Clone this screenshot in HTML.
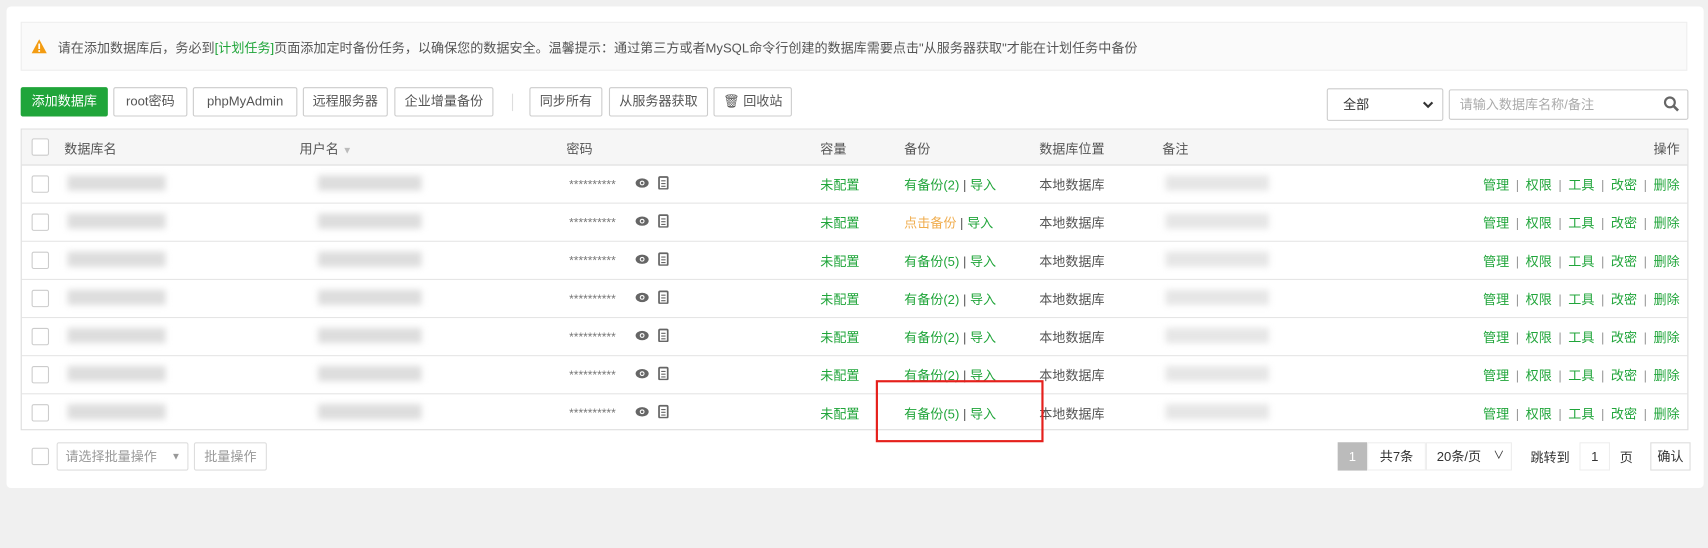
<!DOCTYPE html>
<html><head><meta charset="utf-8"><style>
html,body{margin:0;padding:0;background:#f0f0f0;width:1708px;height:547px;overflow:hidden}
#w{position:absolute;left:0;top:0;width:1568px;height:503px;transform:scale(1.0893);transform-origin:0 0;font-family:"Liberation Sans","Noto Sans CJK SC",sans-serif;font-size:12px;color:#555}
.a{position:absolute}
.panel{left:6px;top:6px;width:1558px;height:442px;background:#fff;border-radius:4px}
.alert{left:19px;top:20px;width:1530px;height:45px;background:#fafafa;border:1px solid #eee;box-sizing:border-box}
.btn{position:absolute;top:80px;height:27px;line-height:25px;border:1px solid #ccc;border-radius:2px;box-sizing:border-box;text-align:center;background:#fff;color:#555}
.tbl{left:19px;top:118px;width:1531px;height:277px;border:1px solid #ddd;box-sizing:border-box}
.hd{left:20px;top:119px;width:1529px;height:32px;background:#f6f6f6;border-bottom:1px solid #ddd}
.cb{position:absolute;width:14px;height:14px;border:1px solid #ccc;border-radius:2px;background:#fff}
.line{position:absolute;left:20px;width:1529px;height:1px;background:#e5e5e5}
.g{color:#20a53a}.o{color:#f0ad4e}
.bl{position:absolute;background:#ddd;filter:blur(3px);height:14px}
.ops{position:absolute;right:26px;color:#20a53a}
.ops i{font-style:normal;color:#999;margin:0 6px}
</style></head><body><div id="w">
<div class="a panel"></div>
<div class="a alert"></div>
<svg class="a" style="left:29px;top:36px" width="14" height="13" viewBox="0 0 14 13"><path d="M7 0L14 13H0Z" fill="#f39c12"/><rect x="6.2" y="4" width="1.6" height="5" fill="#fff"/><rect x="6.2" y="10" width="1.6" height="1.6" fill="#fff"/></svg>
<div class="a" style="left:53px;top:35px;white-space:nowrap">请在添加数据库后，务必到<span class="g">[计划任务]</span>页面添加定时备份任务，以确保您的数据安全。温馨提示：通过第三方或者MySQL命令行创建的数据库需要点击"从服务器获取"才能在计划任务中备份</div>

<div class="btn" style="left:19px;width:80px;background:#20a53a;border-color:#20a53a;color:#fff">添加数据库</div>
<div class="btn" style="left:104px;width:68px">root密码</div>
<div class="btn" style="left:177px;width:96px">phpMyAdmin</div>
<div class="btn" style="left:278px;width:78px">远程服务器</div>
<div class="btn" style="left:362px;width:91px">企业增量备份</div>
<div class="a" style="left:470px;top:86px;width:1px;height:16px;background:#ddd"></div>
<div class="btn" style="left:486px;width:67px">同步所有</div>
<div class="btn" style="left:559px;width:91px">从服务器获取</div>
<div class="btn" style="left:655px;width:72px">🗑 回收站</div>
<div class="a" style="left:1218px;top:81px;width:107px;height:30px;border:1px solid #ccc;box-sizing:border-box;border-radius:2px;line-height:28px;padding-left:14px;color:#333">全部</div>
<svg class="a" style="left:1306px;top:93px" width="10" height="7"><path d="M1 1L5 5L9 1" stroke="#333" stroke-width="2" fill="none"/></svg>
<div class="a" style="left:1330px;top:82px;width:220px;height:28px;border:1px solid #ccc;box-sizing:border-box;border-radius:2px;line-height:26px;padding-left:9px;color:#aaa">请输入数据库名称/备注</div>
<svg class="a" style="left:1527px;top:88px" width="15" height="15"><circle cx="6" cy="6" r="4.5" stroke="#666" stroke-width="2" fill="none"/><path d="M9.5 9.5L13.5 13.5" stroke="#666" stroke-width="2.4"/></svg>

<div class="a tbl"></div>
<div class="a hd"></div>
<div class="cb" style="left:29px;top:127px"></div>
<div class="a" style="left:59px;top:128px">数据库名</div>
<div class="a" style="left:275px;top:128px">用户名 <span style="color:#bbb;font-size:9px">▼</span></div>
<div class="a" style="left:520px;top:128px">密码</div>
<div class="a" style="left:753px;top:128px">容量</div>
<div class="a" style="left:830px;top:128px">备份</div>
<div class="a" style="left:954px;top:128px">数据库位置</div>
<div class="a" style="left:1067px;top:128px">备注</div>
<div class="a" style="right:26px;top:128px">操作</div>

<div id="rows"></div>
<script>
var b=['有备份(2)','点击备份','有备份(5)','有备份(2)','有备份(2)','有备份(2)','有备份(5)'],h='';
for(var i=0;i<7;i++){var t=151+i*35;
if(i>0)h+='<div class="line" style="top:'+t+'px"></div>';
var c=t+10;
h+='<div class="cb" style="left:29px;top:'+(t+10)+'px"></div>';
h+='<div class="bl" style="left:62px;top:'+c+'px;width:90px"></div>';
h+='<div class="bl" style="left:292px;top:'+c+'px;width:95px"></div>';
h+='<div class="bl" style="left:1070px;top:'+c+'px;width:95px;background:#e6e6e6"></div>';
h+='<div class="a" style="left:522px;top:'+(t+13)+'px;color:#777;font-size:11px;font-style:italic">**********</div>';
h+='<svg class="a" style="left:583px;top:'+(t+12)+'px" width="13" height="10"><ellipse cx="6.5" cy="5" rx="6" ry="4.3" fill="#666"/><circle cx="6.5" cy="5" r="2.2" fill="#fff"/><circle cx="6.5" cy="5" r="1.2" fill="#666"/></svg>';
h+='<svg class="a" style="left:604px;top:'+(t+10)+'px" width="10" height="13"><rect x="1" y="1.5" width="8" height="11" rx="1" fill="none" stroke="#666" stroke-width="1.6"/><path d="M3 5h4M3 7.5h4M3 10h4" stroke="#666"/></svg>';
h+='<div class="a g" style="left:753px;top:'+(t+10)+'px">未配置</div>';
h+='<div class="a" style="left:830px;top:'+(t+10)+'px"><span class="'+(i==1?'o':'g')+'">'+b[i]+'</span> | <span class="g">导入</span></div>';
h+='<div class="a" style="left:954px;top:'+(t+10)+'px">本地数据库</div>';
h+='<div class="ops" style="top:'+(t+10)+'px">管理<i>|</i>权限<i>|</i>工具<i>|</i>改密<i>|</i>删除</div>';
}
document.getElementById('rows').innerHTML=h;
</script>
<div class="a" style="left:804px;top:349px;width:154px;height:57px;border:2px solid #e5201c;box-sizing:border-box"></div>

<div class="cb" style="left:29px;top:411px"></div>
<div class="a" style="left:52px;top:406px;width:121px;height:26px;border:1px solid #ddd;box-sizing:border-box;border-radius:2px;line-height:24px;padding-left:7px;color:#999">请选择批量操作<span style="position:absolute;right:6px;font-size:9px">▼</span></div>
<div class="a" style="left:178px;top:406px;width:67px;height:26px;border:1px solid #ddd;box-sizing:border-box;border-radius:2px;line-height:24px;text-align:center;color:#999">批量操作</div>
<div class="a" style="left:1228px;top:406px;width:27px;height:26px;background:#bbb;color:#fff;line-height:26px;text-align:center">1</div>
<div class="a" style="left:1255px;top:406px;width:54px;height:26px;border:1px solid #eee;box-sizing:border-box;line-height:24px;text-align:center;color:#333">共7条</div>
<div class="a" style="left:1309px;top:406px;width:79px;height:26px;border:1px solid #eee;box-sizing:border-box;line-height:24px;padding-left:9px;color:#333">20条/页<span style="position:absolute;right:6px;font-size:10px">∨</span></div>
<div class="a" style="left:1405px;top:411px;color:#333">跳转到</div>
<div class="a" style="left:1450px;top:406px;width:28px;height:26px;border:1px solid #eee;box-sizing:border-box;line-height:24px;text-align:center;color:#333">1</div>
<div class="a" style="left:1487px;top:411px;color:#333">页</div>
<div class="a" style="left:1515px;top:406px;width:37px;height:26px;border:1px solid #ddd;box-sizing:border-box;line-height:24px;text-align:center;color:#333">确认</div>
</div></body></html>
